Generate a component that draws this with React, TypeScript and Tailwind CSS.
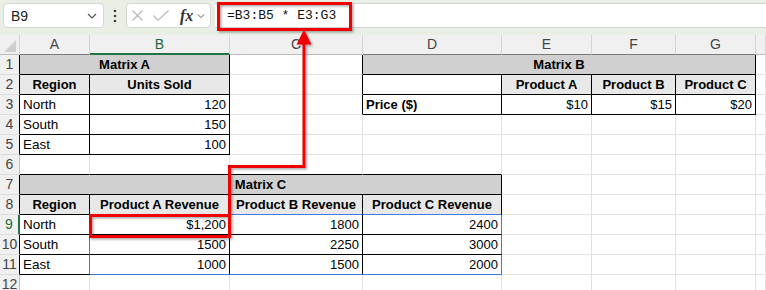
import React from "react";

type Cell = { t?: string; b?: boolean; a?: "l" | "c" | "r"; f?: "d" | "l"; s?: number };
type Placed = Cell & { c: number; s: number };

const COLS = ["A", "B", "C", "D", "E", "F", "G", ""];

const H = (t: string, f: "d" | "l" = "l", s = 1): Cell => ({ t, b: true, a: "c", f, s });
const N = (t: string): Cell => ({ t, a: "r" });
const L = (t: string): Cell => ({ t });

const ROWS: Cell[][] = [
  [H("Matrix A", "d", 2), {}, H("Matrix B", "d", 4)],
  [H("Region"), H("Units Sold"), {}, {}, H("Product A"), H("Product B"), H("Product C")],
  [L("North"), N("120"), {}, { t: "Price ($)", b: true }, N("$10"), N("$15"), N("$20")],
  [L("South"), N("150")],
  [L("East"), N("100")],
  [],
  [H("Matrix C", "d", 4)],
  [H("Region"), H("Product A Revenue"), H("Product B Revenue"), H("Product C Revenue")],
  [L("North"), N("$1,200"), N("1800"), N("2400")],
  [L("South"), N("1500"), N("2250"), N("3000")],
  [L("East"), N("1000"), N("1500"), N("2000")],
  [],
];

const inTable = (r: number, c: number) =>
  (r >= 1 && r <= 5 && c >= 1 && c <= 2) ||
  (r >= 1 && r <= 3 && c >= 4 && c <= 7) ||
  (r >= 7 && r <= 11 && c >= 1 && c <= 4);

const inSpill = (r: number, c: number) => r >= 9 && r <= 11 && c >= 2 && c <= 4;

function place(cells: Cell[]): Placed[] {
  const out: Placed[] = [];
  let c = 1;
  for (const cell of cells) {
    const s = cell.s ?? 1;
    out.push({ ...cell, c, s });
    c += s;
  }
  while (c <= 8) {
    out.push({ c, s: 1 });
    c++;
  }
  return out;
}

function rightColor(r: number, e: number) {
  if (inSpill(r, e) !== inSpill(r, e + 1)) return "border-r-[#3d7be0]";
  if (inTable(r, e) || inTable(r, e + 1)) return "border-r-black";
  return "border-r-[#e1e1e1]";
}

function bottomColor(r: number, c: number) {
  if (inSpill(r, c) !== inSpill(r + 1, c)) return "border-b-[#3d7be0]";
  if (inTable(r, c) || inTable(r + 1, c)) return "border-b-black";
  return "border-b-[#e1e1e1]";
}

const SPAN: Record<number, string> = { 1: "", 2: "col-span-2", 4: "col-span-4" };

function Chevron({ w = 10 }: { w?: number }) {
  return (
    <svg width={w} height={6} viewBox="0 0 10 6" fill="none">
      <path d="M1 1l4 4 4-4" stroke="#555" strokeWidth="1.2" />
    </svg>
  );
}

function Toolbar() {
  return (
    <div className="h-[35px] bg-[#e9efe5] flex items-start pt-[3px]">
      <div className="ml-[3px] w-[101px] h-[25px] bg-white border border-[#d6d9d4] rounded-[4px] flex items-center justify-between pl-[7px] pr-[6px]">
        <span className="text-[14px] text-[#222] leading-none">B9</span>
        <Chevron />
      </div>
      <div className="w-[22px] h-[25px] flex items-center justify-center">
        <svg width="4" height="14" viewBox="0 0 4 14">
          <circle cx="2" cy="2" r="1.3" fill="#444" />
          <circle cx="2" cy="7" r="1.3" fill="#444" />
          <circle cx="2" cy="12" r="1.3" fill="#444" />
        </svg>
      </div>
      <div className="w-[85px] h-[25px] bg-white border border-[#d6d9d4] rounded-[4px] flex items-center pl-[5px]">
        <svg width="11" height="11" viewBox="0 0 11 11" fill="none">
          <path d="M0.5 0.5l10 10M10.5 0.5l-10 10" stroke="#b4b4b4" strokeWidth="1.1" />
        </svg>
        <svg className="ml-[10px]" width="16" height="11" viewBox="0 0 16 11" fill="none">
          <path d="M0.5 5.5l4.5 4.8L15.5 0.5" stroke="#b4b4b4" strokeWidth="1.1" />
        </svg>
        <span className="ml-[11px] font-['Liberation_Serif',serif] italic font-bold text-[16px] text-[#333] leading-none">
          fx
        </span>
        <span className="ml-[4px]">
          <Chevron w={8} />
        </span>
      </div>
      <div className="ml-[4px] flex-1 h-[25px] bg-white border-y border-y-[#d3d3d3] pl-[12px] flex items-center font-['Liberation_Mono',monospace] text-[13px] text-[#111]">
        =B3:B5 * E3:G3
      </div>
    </div>
  );
}

function Sheet() {
  return (
    <div className="grid grid-cols-[20px_70px_140px_133px_139px_90px_84px_80px_1fr] auto-rows-[20px]">
      <div className="bg-[#f0f0f0] border-r border-r-[#d4d4d4] border-b border-b-[#bdbdbd] flex items-end justify-center pb-[2px]">
        <svg width="12" height="12" viewBox="0 0 12 12">
          <path d="M12 0V12H0Z" fill="#cfcfcf" />
        </svg>
      </div>
      {COLS.map((l, i) => (
        <div
          key={i}
          className={`bg-[#f0f0f0] flex items-center justify-center text-[14px] border-r border-r-[#d4d4d4] ${
            i === 1
              ? "border-b-2 border-b-[#217346] text-[#1c6b3f]"
              : `border-b ${inTable(1, i + 1) ? "border-b-[#7a7a7a]" : "border-b-[#bdbdbd]"} text-[#444]`
          }`}
        >
          {l}
        </div>
      ))}
      {ROWS.map((cells, ri) => {
        const r = ri + 1;
        return (
          <React.Fragment key={r}>
            <div
              className={`bg-[#f0f0f0] flex items-center justify-center text-[14px] border-b border-b-[#dcdcdc] ${
                r === 9
                  ? "border-r-2 border-r-[#217346] text-[#1c6b3f]"
                  : `border-r ${inTable(r, 1) ? "border-r-black" : "border-r-[#bdbdbd]"} text-[#444]`
              }`}
            >
              {r}
            </div>
            {place(cells).map((cell) => {
              const e = cell.c + cell.s - 1;
              const fill = cell.f === "d" ? "bg-[#d0d0d0]" : cell.f === "l" ? "bg-[#e8e8e8]" : "bg-white";
              const align =
                cell.a === "c" ? "justify-center" : cell.a === "r" ? "justify-end" : "justify-start";
              const text = cell.b
                ? "font-bold text-[13px]"
                : cell.a === "r"
                  ? "text-[13px]"
                  : "text-[13.5px]";
              return (
                <div
                  key={cell.c}
                  className={`${SPAN[cell.s]} ${fill} ${align} ${text} ${rightColor(r, e)} ${bottomColor(
                    r,
                    cell.c,
                  )} flex items-center pt-[1px] px-[3px] border-r border-b whitespace-nowrap overflow-hidden text-black`}
                >
                  {cell.t}
                </div>
              );
            })}
          </React.Fragment>
        );
      })}
    </div>
  );
}

function Callouts() {
  return (
    <svg className="absolute inset-0 pointer-events-none" width="766" height="290" viewBox="0 0 766 290" fill="none">
      <defs>
        <filter id="sh" x="-10%" y="-10%" width="120%" height="120%">
          <feDropShadow dx="1.5" dy="1.5" stdDeviation="1" floodColor="#000" floodOpacity="0.35" />
        </filter>
      </defs>
      <g filter="url(#sh)">
        <rect x="218.5" y="3.5" width="132" height="26" stroke="#f00000" strokeWidth="3" />
        <rect x="90.5" y="215.5" width="139" height="21" stroke="#f00000" strokeWidth="3" />
        <path d="M229.5 215V166.5H304V43" stroke="#f00000" strokeWidth="3" />
        <path d="M304 29.5L296.5 44.5H311.5Z" fill="#f00000" />
      </g>
    </svg>
  );
}

export default function App() {
  return (
    <div className="relative w-[766px] h-[290px] overflow-hidden bg-white font-['Liberation_Sans',Arial,sans-serif]">
      <Toolbar />
      <Sheet />
      <Callouts />
    </div>
  );
}
